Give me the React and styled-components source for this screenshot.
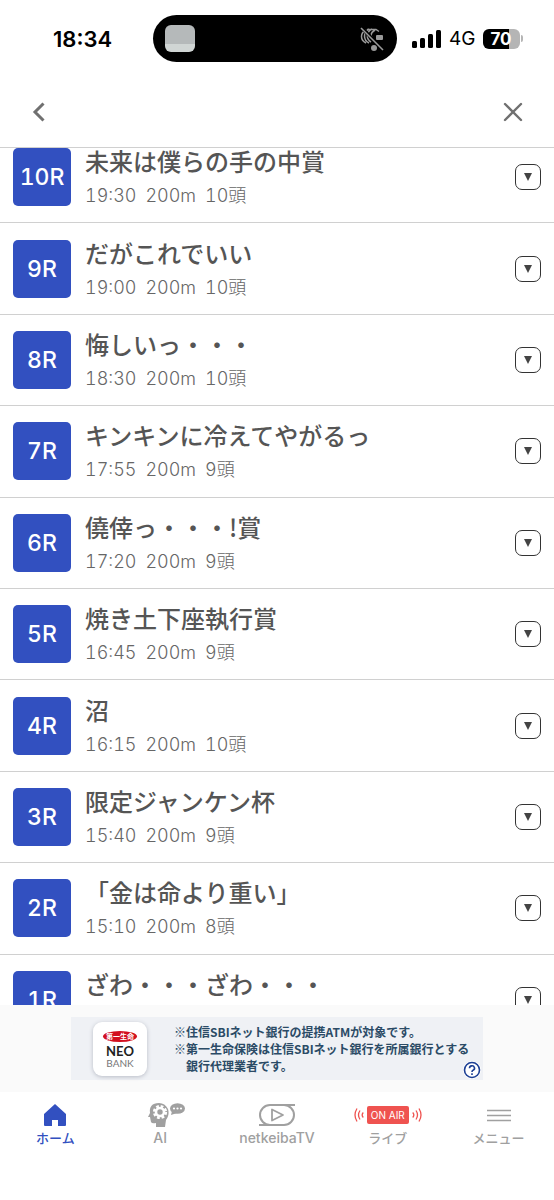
import styled, { createGlobalStyle } from "styled-components";
import React, { useLayoutEffect, useRef, useState } from "react";

const GlobalStyle = createGlobalStyle`
  * {
    box-sizing: border-box;
  }

  body {
    margin: 0;
    background: #fff;
    color: #555;
    font-family: Inter, "Noto Sans CJK JP", sans-serif;
  }

  button {
    padding: 0;
    border: none;
    background: none;
    color: inherit;
    font: inherit;
    cursor: pointer;
  }
`;

const Screen = styled.div`
  display: flex;
  flex-direction: column;
  height: 100vh;
  overflow: hidden;
`;

const StatusBar = styled.div`
  flex: none;
  display: grid;
  grid-template-columns: 1fr auto 1fr;
  align-items: center;
  padding: 15px 4px 14px 0;
  color: #000;
`;

const Clock = styled.time`
  padding-left: 53px;
  font-size: 22px;
  font-weight: 600;
  line-height: 24px;
`;

const Island = styled.div`
  display: flex;
  align-items: center;
  justify-content: space-between;
  width: 244px;
  height: 47px;
  padding: 0 12px;
  border-radius: 24px;
  background: #000;
`;

const Thumbnail = styled.div`
  width: 30px;
  height: 27px;
  border-radius: 6px;
  background: linear-gradient(#b5b9ba 0 72%, #d0d5d4 72%);
`;

const Signals = styled.div`
  display: flex;
  align-items: center;
  gap: 8px;
  padding-left: 15px;
  font-size: 19px;
  line-height: 24px;
`;

const Battery = styled.div`
  display: flex;
  align-items: center;
  gap: 1px;

  &::after {
    content: "";
    width: 2px;
    height: 7px;
    border-radius: 0 2px 2px 0;
    background: #b5b5b5;
  }
`;

const BatteryLevel = styled.span`
  width: 37px;
  padding-right: 2px;
  border-radius: 6px;
  background: linear-gradient(90deg, #000 70%, #b5b5b5 70%);
  color: #fff;
  font-size: 17px;
  font-weight: 700;
  line-height: 20px;
  text-align: center;
`;

const Header = styled.header`
  flex: none;
  display: flex;
  align-items: center;
  justify-content: space-between;
  height: 72px;
  padding: 0 21px 0 19px;
  border-bottom: 1px solid #d0d0d0;
`;

const HeaderButton = styled.button`
  display: flex;
  align-items: center;
  justify-content: center;
  width: 40px;
  height: 40px;
`;

const RaceScroll = styled.main`
  flex: 1;
  min-height: 0;
  overflow-y: auto;
  scrollbar-width: none;
`;

const RaceList = styled.ul`
  display: grid;
  grid-auto-rows: 1fr;
  min-height: calc(100% + 57px);
  margin: 0;
  padding: 0;
  list-style: none;
`;

const RaceRow = styled.li`
  display: flex;
  align-items: center;
  gap: 14px;
  padding: 0 13px;
  border-bottom: 1px solid #d0d0d0;
`;

const RaceNumber = styled.span`
  flex: none;
  display: flex;
  align-items: center;
  justify-content: center;
  width: 58px;
  height: 58px;
  border-radius: 5px;
  background: #3250c0;
  color: #fff;
  font-size: 23px;
  font-weight: 500;
  font-variant-numeric: tabular-nums;
`;

const RaceInfo = styled.div`
  flex: 1;
  min-width: 0;
`;

const RaceTitle = styled.h2`
  margin: 0;
  font-family: "Noto Sans CJK JP", sans-serif;
  font-size: 24px;
  font-weight: 500;
  line-height: 38px;
`;

const RaceMeta = styled.p`
  display: flex;
  gap: 9px;
  margin: 0;
  color: #666;
  font-size: 18px;
  font-weight: 300;
  font-variant-numeric: tabular-nums;
  line-height: 32px;
`;

const ToggleButton = styled.button`
  flex: none;
  display: flex;
  align-items: center;
  justify-content: center;
  width: 26px;
  height: 26px;
  border: 1px solid #333;
  border-radius: 7px;
  background: #fff;

  svg {
    transform: ${({ $open }) => ($open ? "rotate(180deg)" : "none")};
  }
`;

const AdArea = styled.aside`
  flex: none;
  display: flex;
  justify-content: center;
  padding: 12px 0;
  background: #fafafa;
`;

const AdBanner = styled.a`
  position: relative;
  display: flex;
  align-items: center;
  gap: 27px;
  width: 412px;
  height: 63px;
  padding: 0 12px 0 22px;
  background: #eff1f5;
  color: #2b4b66;
  text-decoration: none;
`;

const AdLogo = styled.span`
  flex: none;
  display: flex;
  flex-direction: column;
  align-items: center;
  width: 54px;
  height: 54px;
  padding-top: 9px;
  border-radius: 9px;
  background: #fff;
  box-shadow: 0 1px 4px #b8bcc6;
  font-family: Lato, sans-serif;
  font-size: 10px;
  line-height: 12px;
  color: #777;
`;

const AdSeal = styled.span`
  width: 34px;
  margin-bottom: 3px;
  border-radius: 50%;
  background: #d2101f;
  color: #fff;
  font-family: "Noto Sans CJK JP", sans-serif;
  font-size: 7px;
  font-weight: 700;
  line-height: 11px;
  text-align: center;
`;

const AdBrand = styled.strong`
  color: #222;
  font-size: 13px;
  font-weight: 700;
`;

const AdText = styled.span`
  font-family: "Noto Sans CJK JP", sans-serif;
  font-size: 12px;
  font-weight: 700;
  line-height: 17px;
  white-space: nowrap;
`;

const AdLine = styled.span`
  display: block;
  padding-left: ${({ $indent }) => ($indent ? "12px" : "0")};
`;

const AdHelp = styled.span`
  position: absolute;
  right: 2px;
  bottom: 1px;
  display: flex;
  border-radius: 50%;
  background: #fff;
`;

const TabBar = styled.nav`
  flex: none;
  display: grid;
  grid-template-columns: repeat(5, 1fr);
  height: 108px;
  padding-top: 10px;
  background: #fff;
`;

const Tab = styled.a`
  display: flex;
  flex-direction: column;
  align-items: center;
  color: ${({ $active }) => ($active ? "#3250c0" : "#a0a0a0")};
  font-size: 13px;
  font-weight: 500;
  line-height: 20px;
  text-decoration: none;
`;

const TabIcon = styled.span`
  display: flex;
  align-items: center;
  justify-content: center;
  height: 26px;
`;

const TabLabel = styled.span`
  padding-right: ${({ $underHead }) => ($underHead ? "12px" : "0")};
  font-size: ${({ $latin }) => ($latin ? "14px" : "13px")};
`;

const OnAir = styled.span`
  display: flex;
  align-items: center;
  gap: 3px;
`;

const OnAirLabel = styled.span`
  padding: 0 4px;
  border-radius: 2px;
  background: #ef5350;
  color: #fff;
  font-size: 10px;
  font-weight: 400;
  line-height: 18px;
  white-space: nowrap;
`;

const races = [
  { number: 10, title: "未来は僕らの手の中賞", time: "19:30", distance: "200m", heads: "10頭" },
  { number: 9, title: "だがこれでいい", time: "19:00", distance: "200m", heads: "10頭" },
  { number: 8, title: "悔しいっ・・・", time: "18:30", distance: "200m", heads: "10頭" },
  { number: 7, title: "キンキンに冷えてやがるっ", time: "17:55", distance: "200m", heads: "9頭" },
  { number: 6, title: "僥倖っ・・・!賞", time: "17:20", distance: "200m", heads: "9頭" },
  { number: 5, title: "焼き土下座執行賞", time: "16:45", distance: "200m", heads: "9頭" },
  { number: 4, title: "沼", time: "16:15", distance: "200m", heads: "10頭" },
  { number: 3, title: "限定ジャンケン杯", time: "15:40", distance: "200m", heads: "9頭" },
  { number: 2, title: "「金は命より重い」", time: "15:10", distance: "200m", heads: "8頭" },
  { number: 1, title: "ざわ・・・ざわ・・・", time: "14:40", distance: "200m", heads: "8頭" },
];

function MutedIcon() {
  return (
    <svg width="26" height="26" viewBox="0 0 26 26" fill="none" stroke="#9a9a9a" strokeWidth="1.5">
      <path d="M7 4C1 7 1 14 7 17M10 3C4 6 4 14 10 17M13 3C7 6 7 13 12 16M16 4C11 7 11 11 15 14M8 3.500h9l3 2" />
      <rect x="17" y="9" width="7" height="5" rx="1" fill="#9a9a9a" stroke="none" />
      <circle cx="15" cy="22" r="3" fill="#9a9a9a" stroke="none" />
      <path d="M3 2l21 22" stroke="#000" strokeWidth="3.500" />
      <path d="M2 2l22 22" strokeWidth="1.600" />
    </svg>
  );
}

function SignalIcon() {
  return (
    <svg width="29" height="18" viewBox="0 0 29 18">
      <rect x="0" y="11" width="5" height="7" rx="1.5" />
      <rect x="8" y="8" width="5" height="10" rx="1.5" />
      <rect x="16" y="4" width="5" height="14" rx="1.5" />
      <rect x="24" y="0" width="5" height="18" rx="1.5" />
    </svg>
  );
}

function HomeIcon() {
  return (
    <svg width="22" height="22" viewBox="0 0 22 22" fill="currentColor">
      <path d="M11 0L22 10v11q0 1-1 1h-7v-6H8v6H1q-1 0-1-1V10z" />
    </svg>
  );
}

function AiIcon() {
  return (
    <svg width="37" height="25" viewBox="0 0 37 25" fill="currentColor">
      <path d="M11 0C4 0 1 4 2 10L0 14h2l1 5q1 2 5 1v4h9l1-7c3-4 3-8 2-11Q17 0 11 0z" />
      <circle cx="12" cy="9" r="5.6" fill="none" stroke="#fff" strokeWidth="3" strokeDasharray="2.6 1.8" />
      <circle cx="12" cy="9" r="4" fill="none" stroke="#fff" strokeWidth="2.6" />
      <ellipse cx="29.5" cy="5.5" rx="7.5" ry="5.3" />
      <path d="M24 8l-1 4 6-2z" />
      <g fill="#fff">
        <circle cx="26" cy="5.5" r="1.1" />
        <circle cx="29.5" cy="5.5" r="1.1" />
        <circle cx="33" cy="5.5" r="1.1" />
      </g>
    </svg>
  );
}

function TvIcon() {
  return (
    <svg width="36" height="22" viewBox="0 0 36 22" fill="none" stroke="currentColor" strokeWidth="2">
      <path d="M36 1H11a10 10 0 0 0 0 20M0 21h25a10 10 0 0 0 0-20" />
      <path d="M13 5.500v11l11-5.500z" strokeWidth="1.8" strokeLinejoin="round" />
    </svg>
  );
}

function WavesIcon({ flip }) {
  return (
    <svg width="10" height="14" viewBox="0 0 10 14" fill="none" stroke="#ef5350" strokeWidth="1.3">
      <path
        transform={flip ? "translate(10 0) scale(-1 1)" : undefined}
        d="M3 .5Q-1 7 3 13.500M6 2.500Q3 7 6 11.500M9.300 4.500Q7 7 9.300 9.500"
      />
    </svg>
  );
}

function MenuIcon() {
  return (
    <svg width="24" height="13" viewBox="0 0 24 13" stroke="currentColor" strokeWidth="1.6">
      <path d="M0 1.500h24M0 6.500h24M0 11.500h24" />
    </svg>
  );
}

function RaceItem({ race }) {
  const [isOpen, setIsOpen] = useState(false);

  return (
    <RaceRow>
      <RaceNumber>{race.number}R</RaceNumber>
      <RaceInfo>
        <RaceTitle>{race.title}</RaceTitle>
        <RaceMeta>
          <span>{race.time}</span>
          <span>{race.distance}</span>
          <span>{race.heads}</span>
        </RaceMeta>
      </RaceInfo>
      <ToggleButton
        type="button"
        $open={isOpen}
        aria-label={`${race.number}R`}
        aria-expanded={isOpen}
        onClick={() => setIsOpen(!isOpen)}
      >
        <svg width="8" height="8" viewBox="0 0 8 8" fill="#444">
          <path d="M0 0h8L4 8z" />
        </svg>
      </ToggleButton>
    </RaceRow>
  );
}

function App() {
  const scrollRef = useRef(null);

  useLayoutEffect(() => {
    scrollRef.current.scrollTop = 16;
  }, []);

  return (
    <Screen>
      <GlobalStyle />
      <StatusBar>
        <Clock>18:34</Clock>
        <Island>
          <Thumbnail />
          <MutedIcon />
        </Island>
        <Signals>
          <SignalIcon />
          <span>4G</span>
          <Battery>
            <BatteryLevel>70</BatteryLevel>
          </Battery>
        </Signals>
      </StatusBar>

      <Header>
        <HeaderButton type="button" aria-label="戻る">
          <svg width="14" height="20" viewBox="0 0 14 20" fill="none" stroke="#707070" strokeWidth="3">
            <path d="M11.500 1.500L3 10l8.500 8.500" />
          </svg>
        </HeaderButton>
        <HeaderButton type="button" aria-label="閉じる">
          <svg width="20" height="20" viewBox="0 0 20 20" fill="none" stroke="#707070" strokeWidth="2.4" strokeLinecap="round">
            <path d="M2 2l16 16M18 2L2 18" />
          </svg>
        </HeaderButton>
      </Header>

      <RaceScroll ref={scrollRef}>
        <RaceList>
          {races.map((race) => (
            <RaceItem key={race.number} race={race} />
          ))}
        </RaceList>
      </RaceScroll>

      <AdArea>
        <AdBanner href="#ad">
          <AdLogo>
            <AdSeal>第一生命</AdSeal>
            <AdBrand>NEO</AdBrand>
            <span>BANK</span>
          </AdLogo>
          <AdText>
            <AdLine>※住信SBIネット銀行の提携ATMが対象です。</AdLine>
            <AdLine>※第一生命保険は住信SBIネット銀行を所属銀行とする</AdLine>
            <AdLine $indent>銀行代理業者です。</AdLine>
          </AdText>
          <AdHelp>
            <svg width="18" height="18" viewBox="0 0 18 18" fill="none" stroke="#1c3f94" strokeWidth="1.6">
              <circle cx="9" cy="9" r="7.5" />
              <path d="M6.500 7.200a2.500 2.300 0 1 1 3.600 2Q9 9.900 9 11" />
              <path d="M9 12.200v1.700" />
            </svg>
          </AdHelp>
        </AdBanner>
      </AdArea>

      <TabBar>
        <Tab href="#home" $active>
          <TabIcon>
            <HomeIcon />
          </TabIcon>
          <TabLabel>ホーム</TabLabel>
        </Tab>
        <Tab href="#ai">
          <TabIcon>
            <AiIcon />
          </TabIcon>
          <TabLabel $latin $underHead>
            AI
          </TabLabel>
        </Tab>
        <Tab href="#tv">
          <TabIcon>
            <TvIcon />
          </TabIcon>
          <TabLabel $latin>netkeibaTV</TabLabel>
        </Tab>
        <Tab href="#live">
          <TabIcon>
            <OnAir>
              <WavesIcon />
              <OnAirLabel>ON AIR</OnAirLabel>
              <WavesIcon flip />
            </OnAir>
          </TabIcon>
          <TabLabel>ライブ</TabLabel>
        </Tab>
        <Tab href="#menu">
          <TabIcon>
            <MenuIcon />
          </TabIcon>
          <TabLabel>メニュー</TabLabel>
        </Tab>
      </TabBar>
    </Screen>
  );
}

export default App;
